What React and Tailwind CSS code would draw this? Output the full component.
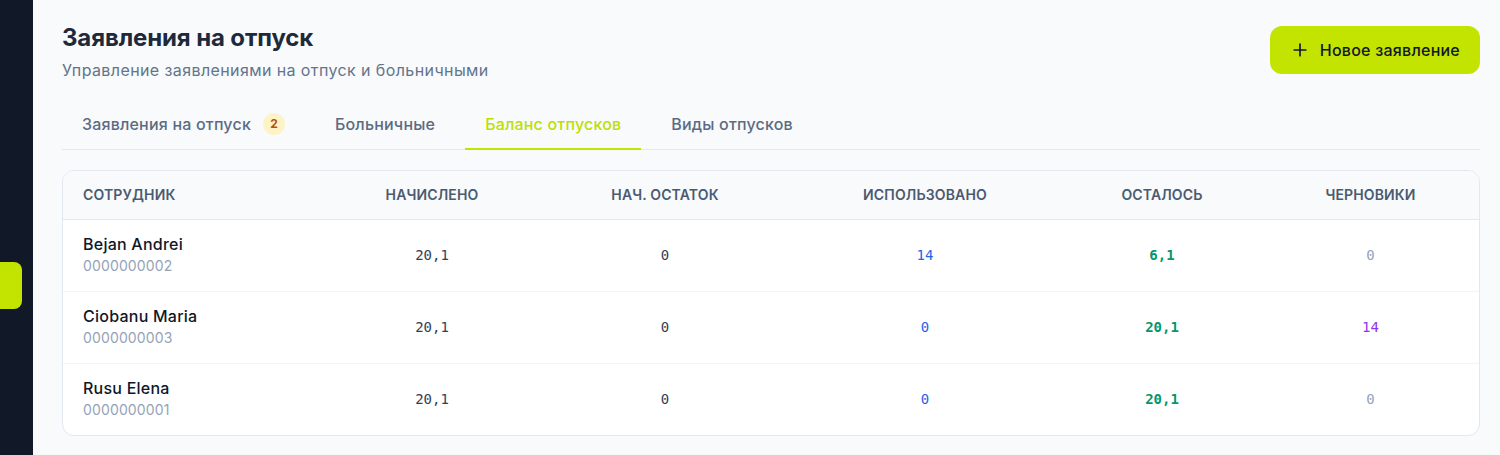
import React from "react";
import { Plus } from "lucide-react";

const rows = [
  { name: "Bejan Andrei", id: "0000000002", accrued: "20,1", opening: "0", used: "14", left: "6,1", drafts: "0" },
  { name: "Ciobanu Maria", id: "0000000003", accrued: "20,1", opening: "0", used: "0", left: "20,1", drafts: "14" },
  { name: "Rusu Elena", id: "0000000001", accrued: "20,1", opening: "0", used: "0", left: "20,1", drafts: "0" },
];

const tabs = [
  { label: "Заявления на отпуск", badge: 2 },
  { label: "Больничные" },
  { label: "Баланс отпусков", active: true },
  { label: "Виды отпусков" },
];

const mono = { fontFamily: "'DejaVu Sans Mono', monospace" };

export default function App() {
  return (
    <div className="flex h-[455px] bg-[#f8fafc] font-['Inter',sans-serif] overflow-hidden">
      <aside className="w-[33px] shrink-0 bg-[#111827]">
        <div className="mt-[262px] h-[47px] w-[22px] rounded-r-lg bg-[#c2e400]" />
      </aside>

      <main className="flex-1 pl-[29px] pr-5 pt-[22px]">
        <div className="flex items-start justify-between">
          <div>
            <h1 className="text-2xl leading-8 font-bold tracking-[-0.005em] text-[#1e293b]">Заявления на отпуск</h1>
            <p className="mt-1 text-base leading-6 tracking-[0.025em] text-[#64748b]">
              Управление заявлениями на отпуск и больничными
            </p>
          </div>
          <button className="mt-1 flex items-center gap-2.5 rounded-xl bg-[#c2e400] px-5 py-3 text-base leading-6 font-medium tracking-[0.015em] text-[#111827]">
            <Plus size={20} strokeWidth={2} />
            Новое заявление
          </button>
        </div>

        <div className="mt-[18px] flex gap-2.5 border-b border-[#e2e8f0]">
          {tabs.map((t) => (
            <div
              key={t.label}
              className={
                t.active
                  ? "-mb-px flex items-center gap-3 border-b-2 border-[#c2e400] px-5 py-3 text-base leading-6 font-medium tracking-[0.012em] text-[#bde000]"
                  : "-mb-px flex items-center gap-3 border-b-2 border-transparent px-5 py-3 text-base leading-6 font-medium tracking-[0.012em] text-[#5b6b84]"
              }
            >
              {t.label}
              {t.badge && (
                <span className="flex h-[22px] w-[22px] items-center justify-center rounded-full bg-[#fef3c7] text-xs font-bold tracking-normal text-[#b45309]">
                  {t.badge}
                </span>
              )}
            </div>
          ))}
        </div>

        <div className="mt-5 overflow-hidden rounded-xl border border-[#e2e8f0] bg-white">
          <table className="w-full table-fixed border-collapse">
            <colgroup>
              <col className="w-[259px]" />
              <col className="w-[220px]" />
              <col className="w-[246px]" />
              <col className="w-[274px]" />
              <col className="w-[200px]" />
              <col />
            </colgroup>
            <thead>
              <tr className="h-[48px] border-b border-[#e2e8f0] bg-[#f8fafc] text-sm font-semibold uppercase tracking-[0.01em] text-[#4b5a70]">
                <th className="px-5 text-left font-semibold">Сотрудник</th>
                <th className="font-semibold">Начислено</th>
                <th className="font-semibold">Нач. остаток</th>
                <th className="font-semibold">Использовано</th>
                <th className="font-semibold">Осталось</th>
                <th className="font-semibold">Черновики</th>
              </tr>
            </thead>
            <tbody>
              {rows.map((r, i) => (
                <tr
                  key={r.id}
                  className={i < rows.length - 1 ? "h-[72px] border-b border-[#f1f5f9]" : "h-[72px]"}
                >
                  <td className="px-5">
                    <div className="text-base leading-5 font-medium tracking-[0.015em] text-[#0f172a]">{r.name}</div>
                    <div className="mt-0.5 text-sm leading-5 tracking-[0.01em] text-[#94a3b8]">{r.id}</div>
                  </td>
                  <td className="text-center text-sm text-[#334155]" style={mono}>{r.accrued}</td>
                  <td className="text-center text-sm text-[#334155]" style={mono}>{r.opening}</td>
                  <td className="text-center text-sm text-[#2563eb]" style={mono}>{r.used}</td>
                  <td className="text-center text-sm font-bold text-[#059669]" style={mono}>{r.left}</td>
                  <td
                    className={
                      r.drafts === "0"
                        ? "text-center text-sm text-[#94a3b8]"
                        : "text-center text-sm text-[#9333ea]"
                    }
                    style={mono}
                  >
                    {r.drafts}
                  </td>
                </tr>
              ))}
            </tbody>
          </table>
        </div>
      </main>
    </div>
  );
}
